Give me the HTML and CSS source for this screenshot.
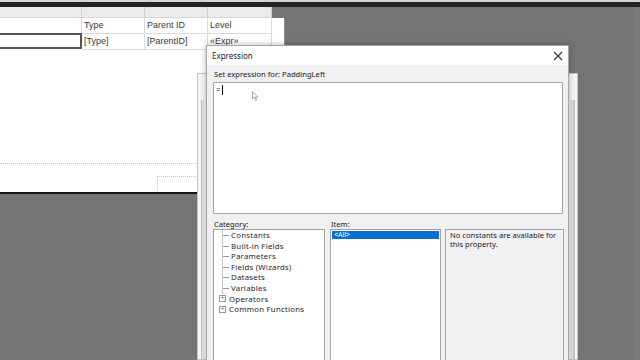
FILE: index.html
```html
<!DOCTYPE html>
<html lang="en">
<head>
    <meta charset="UTF-8">
    <meta name="viewport" content="width=device-width, initial-scale=1.0">
    <title>Expression</title>
    <link rel="stylesheet" href="styles.css">
</head>
<body>
    <div class="topbar"></div>

    <div class="workspace">
        <!-- report designer surface -->
        <div class="designer">
            <div class="ruler">
                <span class="ruler-cell c1"></span>
                <span class="ruler-cell c2"></span>
                <span class="ruler-cell c3"></span>
                <span class="ruler-cell c4"></span>
            </div>
            <div class="report">
                <div class="grid">
                    <div class="row">
                        <div class="cell c1"></div>
                        <div class="cell c2">Type</div>
                        <div class="cell c3">Parent ID</div>
                        <div class="cell c4">Level</div>
                    </div>
                    <div class="row">
                        <div class="cell c1 selected"></div>
                        <div class="cell c2">[Type]</div>
                        <div class="cell c3">[ParentID]</div>
                        <div class="cell c4">«Expr»</div>
                    </div>
                </div>
                <div class="band-line"></div>
                <div class="footer-box"></div>
            </div>
        </div>

        <!-- window behind the dialog -->
        <div class="ghost">
            <div class="ghost-inner"></div>
        </div>

        <!-- expression dialog -->
        <div class="dialog">
            <div class="titlebar">
                <span class="title">Expression</span>
                <svg class="close" width="10" height="10" viewBox="0 0 10 10">
                    <path d="M1 1 L9 9 M9 1 L1 9" stroke="#333" stroke-width="1.1" fill="none"/>
                </svg>
            </div>
            <div class="dialog-body">
                <div class="label">Set expression for: PaddingLeft</div>
                <div class="editor">
                    <span class="expr">=</span><span class="caret"></span>
                    <svg class="pointer" width="7" height="10" viewBox="0 0 7 10">
                        <path d="M0.5 0.5 L0.5 8 L2.3 6.3 L3.6 9.3 L4.6 8.9 L3.4 6 L5.8 6 Z" fill="#fff" stroke="#888" stroke-width="0.7"/>
                    </svg>
                </div>
                <div class="lists">
                    <div class="label">Category:</div>
                    <div class="label">Item:</div>

                    <div class="box tree">
                        <div class="node"><span class="branch"></span>Constants</div>
                        <div class="node"><span class="branch"></span>Built-in Fields</div>
                        <div class="node"><span class="branch"></span>Parameters</div>
                        <div class="node"><span class="branch"></span>Fields (Wizards)</div>
                        <div class="node"><span class="branch"></span>Datasets</div>
                        <div class="node"><span class="branch"></span>Variables</div>
                        <div class="node"><span class="expander">+</span>Operators</div>
                        <div class="node"><span class="expander">+</span>Common Functions</div>
                    </div>
                    <div class="box items">
                        <div class="item active">&lt;All&gt;</div>
                    </div>
                    <div class="box info">
                        No constants are available for<br>this property.
                    </div>
                </div>
            </div>
        </div>
    </div>
</body>
</html>
```

FILE: styles.css
```css
body {
    margin: 0;
    width: 640px;
    height: 360px;
    overflow: hidden;
    background-color: #757375;
    font-family: "Noto Sans", "Open Sans", sans-serif;
}

.topbar {
    height: 5px;
    border-top: 2px solid #d4d4d4;
    background-color: #242425;
}

.workspace {
    position: relative;
    height: 353px;
    border-right: 7px solid #7b797b;
    box-sizing: border-box;
}

/* designer */

.designer {
    width: 285px;
}

.ruler {
    display: flex;
    height: 11px;
}

.ruler-cell {
    height: 10px;
    background-color: #ebebeb;
    border-right: 1px solid #d2d2d2;
    border-bottom: 1px solid #d6d6d6;
}

.c1 { width: 81px; }
.c2 { width: 62px; }
.c3 { width: 62px; }
.c4 { width: 63px; }

.report {
    height: 174px;
    background-color: #fff;
    border-bottom: 2px solid #151515;
    border-right: 1px solid #8c8c8c;
    display: flex;
    flex-direction: column;
}

.grid {
    font-family: "Liberation Sans", Arial, sans-serif;
    font-size: 9px;
    color: #3a3a3a;
}

.row {
    display: flex;
    height: 16px;
}

.cell {
    height: 15px;
    line-height: 15px;
    padding-left: 2px;
    box-sizing: content-box;
    border-right: 1px solid #dadada;
    border-bottom: 1px solid #dadada;
}

.cell.c1 { width: 79px; }
.cell.c2 { width: 60px; }
.cell.c3 { width: 60px; }
.cell.c4 { width: 61px; }

.cell.selected {
    height: 12px;
    width: 78px;
    border: 2px solid #555;
    border-left: none;
    margin-top: -1px;
}

.band-line {
    margin-top: 113px;
    border-top: 1px dotted #c4c4c4;
}

.footer-box {
    margin-top: 12px;
    margin-left: 157px;
    height: 15px;
    border: 1px dotted #c4c4c4;
    border-bottom: none;
}

/* window behind */

.ghost {
    position: absolute;
    left: 197px;
    top: 66px;
    width: 381px;
    bottom: 0;
    box-sizing: border-box;
    background-color: #f6f6f6;
    border: 1px solid #c2c2c2;
    padding: 26px 2px 0 3px;
}

.ghost-inner {
    height: 100%;
    border-left: 1px solid #c6c6c6;
    border-right: 2px solid #c6c6c6;
    box-shadow: inset 2px 0 0 #e4e4e4, inset -3px 0 0 #e4e4e4;
}

/* dialog */

.dialog {
    position: absolute;
    left: 206px;
    top: 38px;
    width: 363px;
    bottom: -2px;
    box-sizing: border-box;
    background-color: #f0eff1;
    border: 1px solid #a6a6a6;
    box-shadow: 0 0 6px rgba(0, 0, 0, 0.3);
    font-size: 7.6px;
    color: #222;
}

.titlebar {
    height: 19px;
    background-color: #fff;
    display: flex;
    align-items: center;
    justify-content: space-between;
    padding: 0 5px 0 5px;
}

.title {
    font-size: 8px;
    color: #222;
}

.close {
    display: block;
}

.dialog-body {
    padding: 4px 5px 0 6px;
}

.label {
    height: 10px;
    line-height: 10px;
    padding-left: 1px;
}

.editor {
    position: relative;
    margin-top: 3px;
    height: 128px;
    background-color: #fff;
    border: 1px solid #a3a3a3;
    padding: 1px 2px;
    display: flex;
    align-items: flex-start;
    font-size: 8px;
}

.caret {
    width: 1px;
    height: 10px;
    background-color: #000;
    margin-left: 1px;
    margin-top: 1px;
}

.pointer {
    position: absolute;
    left: 38px;
    top: 8px;
}

.lists {
    margin-top: 5px;
    display: grid;
    grid-template-columns: 112px 111px 118px;
    grid-template-rows: 10px 140px;
    column-gap: 5px;
}

.box {
    grid-row: 2;
    box-sizing: border-box;
    border: 1px solid #a3a3a3;
    background-color: #fff;
}

.info {
    margin-left: -1px;
    background-color: #f1f0f3;
    padding: 1px 4px;
    line-height: 9px;
}

.tree {
    font-size: 7.8px;
    letter-spacing: 0.25px;
    color: #1e1e1e;
}

.node {
    height: 10.6px;
    line-height: 10.6px;
    display: flex;
    align-items: center;
}

.branch {
    width: 7px;
    height: 10.6px;
    margin: 0 2px 0 8px;
    box-sizing: border-box;
    border-left: 1px solid #c4c4c4;
    background: linear-gradient(#9a9a9a, #9a9a9a) no-repeat 0 5px / 7px 1px;
}

.expander {
    width: 5px;
    height: 5px;
    border: 1px solid #999;
    margin: 0 3px 0 5px;
    font-size: 6px;
    line-height: 5px;
    text-align: center;
    color: #555;
    letter-spacing: 0;
}

.items {
    padding: 1px;
}

.item {
    height: 8px;
    line-height: 8px;
    padding-left: 2px;
    font-size: 7px;
}

.item.active {
    background-color: #0a6fd1;
    color: #fff;
}
```
